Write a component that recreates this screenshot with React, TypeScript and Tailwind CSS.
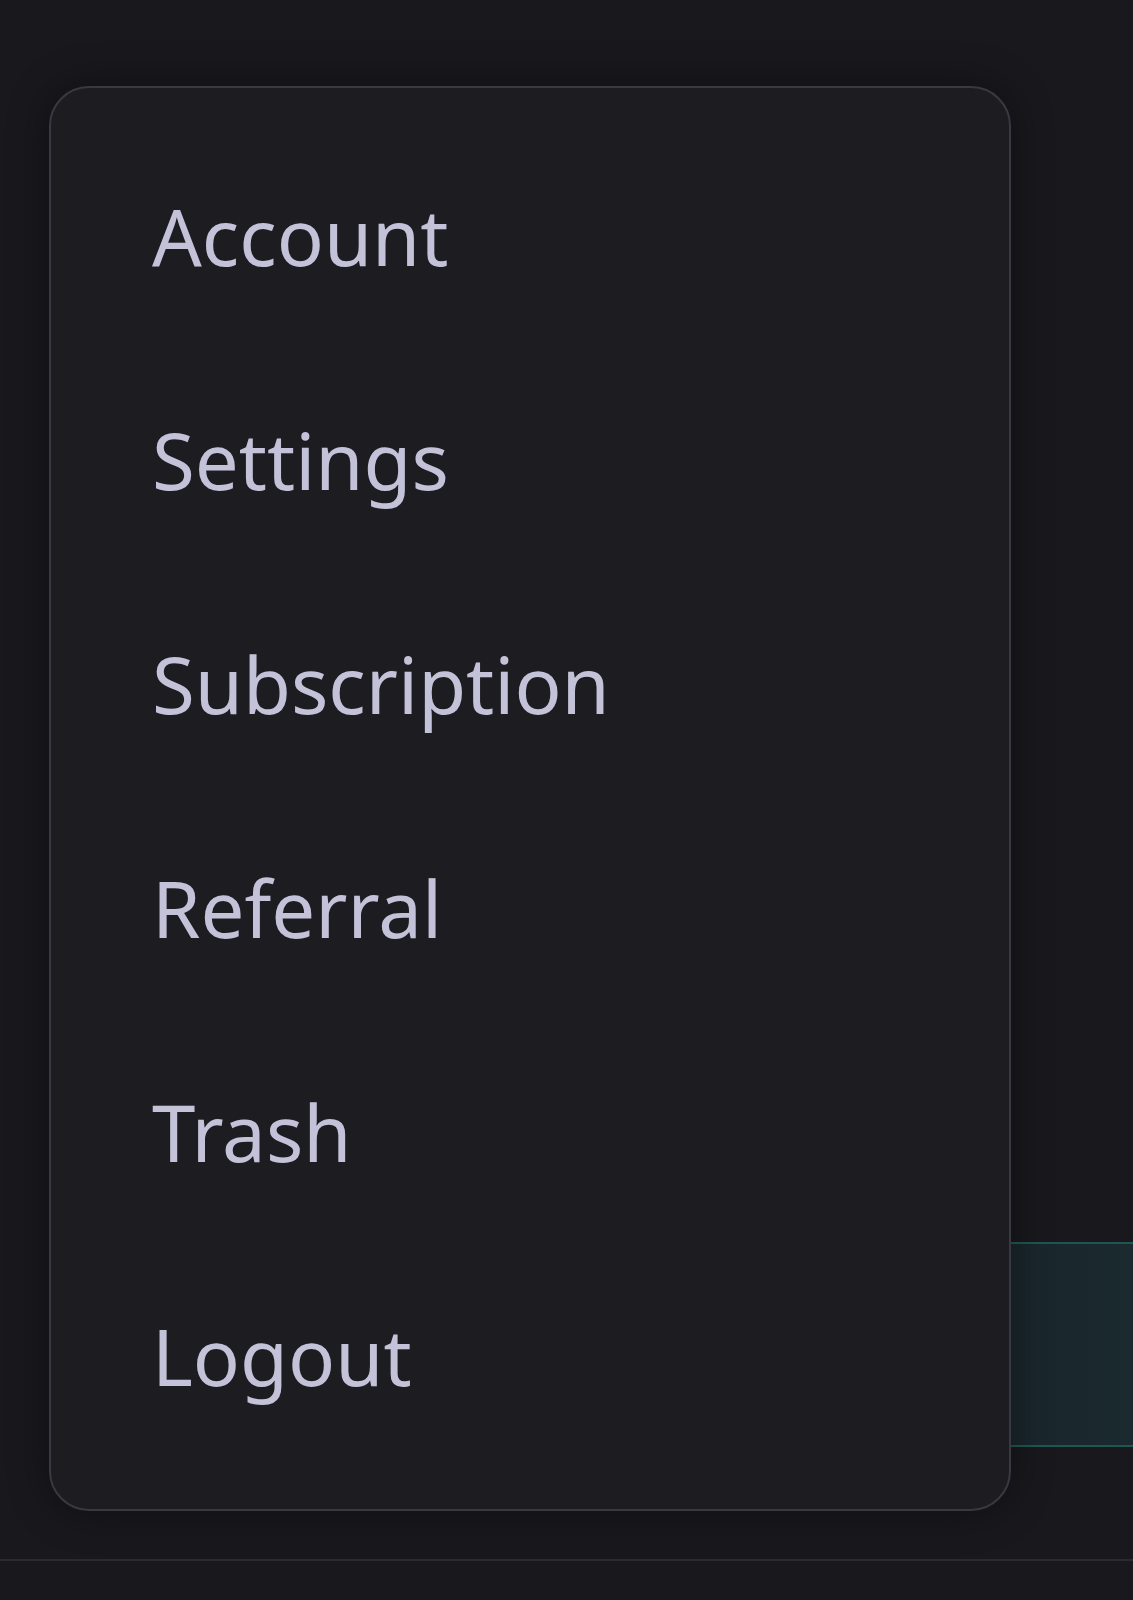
const items = ["Account", "Settings", "Subscription", "Referral", "Trash", "Logout"]

export default function App() {
  return (
    <div className="relative h-[1600px] w-full overflow-hidden bg-[#18181d] font-['Noto_Sans',sans-serif]">
      {/* content behind the menu */}
      <div className="flex flex-col">
        <div className="mt-[1242px] flex justify-end">
          <div className="h-[205px] w-[300px] border-y-[2px] border-[#1d5753] bg-gradient-to-r from-[#161f24] to-[#1b2a2f]" />
        </div>
        <div className="mt-[112px] h-[2px] w-full bg-[#2a2a31]" />
      </div>

      {/* dropdown menu */}
      <div className="absolute left-[49px] top-[86px] w-[962px] rounded-[40px] border-2 border-[#393943] bg-[#1c1c21] pt-[36px] pb-[41px] shadow-[0_0_40px_rgba(0,0,0,0.35)]">
        <ul className="flex flex-col">
          {items.map((item) => (
            <li key={item} className="flex h-[224px] items-center pl-[101px] text-[78px] leading-[224px] text-[#c3c2d8]">
              {item}
            </li>
          ))}
        </ul>
      </div>
    </div>
  )
}
